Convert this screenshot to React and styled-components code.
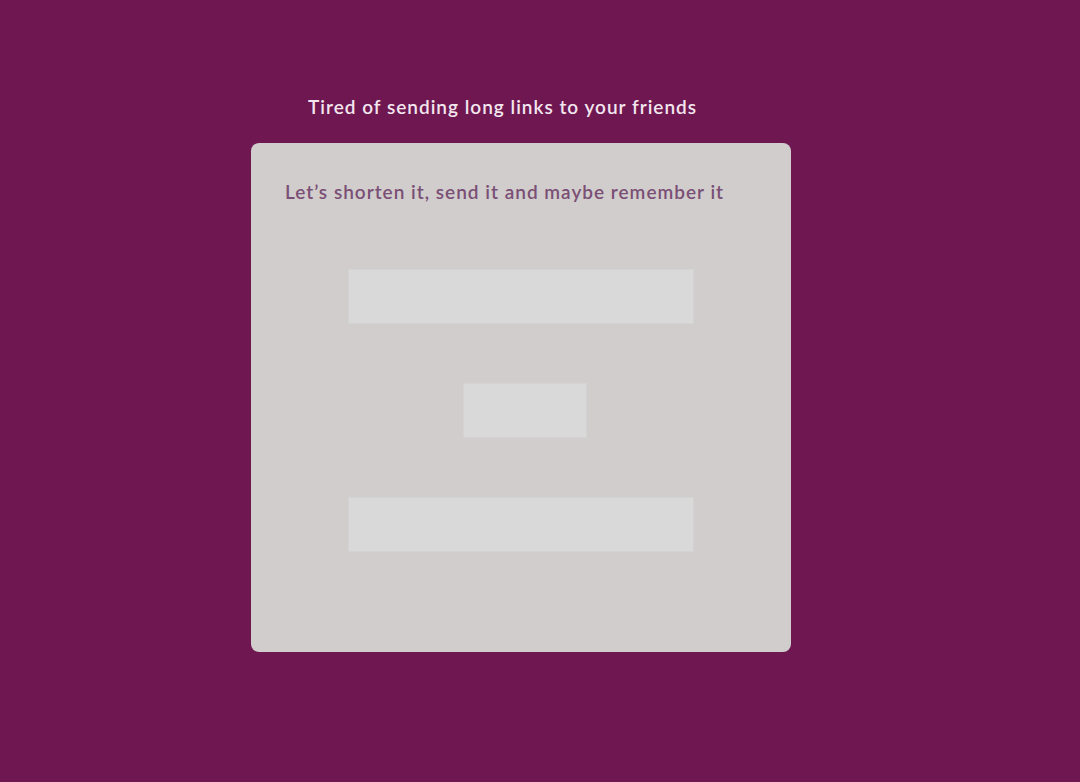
import React from "react";
import styled, { createGlobalStyle } from "styled-components";

const GlobalStyle = createGlobalStyle`
  html, body {
    margin: 0;
    padding: 0;
    background: #6e1751;
  }
  body {
    font-family: Lato, "Open Sans", sans-serif;
  }
`;

const Page = styled.main`
  min-height: 782px;
  padding-top: 94px;
  box-sizing: border-box;
`;

const Column = styled.div`
  width: 540px;
  margin-left: 251px;
`;

const Heading = styled.h1`
  margin: 0 0 23px 57px;
  font-size: 19px;
  line-height: 26px;
  font-weight: 600;
  color: #f3e6ee;
  letter-spacing: 1px;
  white-space: nowrap;
`;

const Card = styled.section`
  height: 509px;
  box-sizing: border-box;
  background: #d1cdcc;
  border-radius: 8px;
  padding: 36px 0 0 34px;
`;

const Lead = styled.p`
  margin: 0;
  font-size: 19px;
  line-height: 26px;
  font-weight: 600;
  color: #7a4f75;
  letter-spacing: 1px;
  white-space: nowrap;
`;

const Form = styled.form`
  display: flex;
  flex-direction: column;
  align-items: center;
  gap: 59px;
  margin: 64px 0 0 -34px;
`;

const Field = styled.input`
  width: 346px;
  height: 55px;
  box-sizing: border-box;
  background: #d9d9d9;
  border: 1px solid #d4d3d3;
  outline: none;
  margin-left: ${({ $shift }) => $shift || 0}px;
`;

const Submit = styled.button`
  width: 124px;
  height: 55px;
  box-sizing: border-box;
  background: #d9d9d9;
  border: 1px solid #d4d3d3;
  margin-left: 8px;
  cursor: pointer;
`;

const App = () => (
  <>
    <GlobalStyle />
    <Page>
      <Column>
        <Heading>Tired of sending long links to your friends</Heading>
        <Card>
          <Lead>Let’s shorten it, send it and maybe remember it</Lead>
          <Form onSubmit={(e) => e.preventDefault()}>
            <Field type="text" aria-label="Long link" $shift={-1} />
            <Submit type="submit" aria-label="Shorten" />
            <Field type="text" aria-label="Short link" readOnly />
          </Form>
        </Card>
      </Column>
    </Page>
  </>
);

export default App;
